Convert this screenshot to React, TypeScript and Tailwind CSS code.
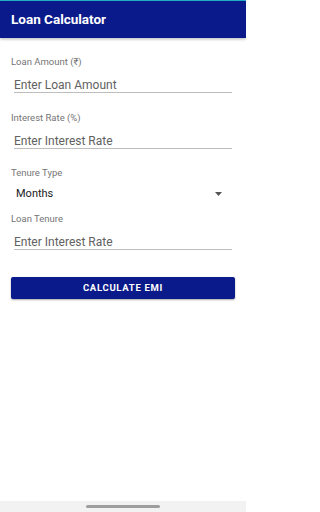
import React from "react";

function Field({ label, placeholder }: { label: string; placeholder: string }) {
  return (
    <div className="flex flex-col">
      <div className="h-[12px] text-[9.5px] leading-[12px] text-[#757575]">{label}</div>
      <div className="mt-[8px] mx-[3px] h-[17px] pt-px border-b border-[#bdbdbd] text-[12px] leading-[16px] text-[#616161]">
        {placeholder}
      </div>
    </div>
  );
}

export default function App() {
  return (
    <div
      className="w-[246px] h-[512px] bg-white flex flex-col overflow-hidden"
      style={{ fontFamily: "Roboto, 'Noto Sans', sans-serif" }}
    >
      <div className="h-px bg-[#22b8cf]" />
      <div className="h-[37px] bg-[#0a1a8a] flex items-center px-[11px] shadow-[0_1px_3px_rgba(0,0,0,0.3)]">
        <span className="text-white text-[13.5px] font-bold">Loan Calculator</span>
      </div>
      <div className="flex flex-col px-[11px] pt-[18px]">
        <Field label="Loan Amount (₹)" placeholder="Enter Loan Amount" />
        <div className="h-[19px]" />
        <Field label="Interest Rate (%)" placeholder="Enter Interest Rate" />
        <div className="h-[18px]" />
        <div className="flex flex-col">
          <div className="h-[12px] text-[9.5px] leading-[12px] text-[#757575]">Tenure Type</div>
          <div className="mt-[7px] ml-[5px] mr-[13px] h-[16px] flex items-center justify-between">
            <span className="text-[11px] leading-[16px] text-[#212121]">Months</span>
            <svg width="7" height="4" viewBox="0 0 7 4">
              <path d="M0 0 L7 0 L3.5 4 Z" fill="#555" />
            </svg>
          </div>
        </div>
        <div className="h-[11px]" />
        <Field label="Loan Tenure" placeholder="Enter Interest Rate" />
        <button className="mt-[27px] h-[22px] w-full rounded-[2px] bg-[#0a1a8a] text-white text-[9.5px] font-bold tracking-[0.7px] shadow-[0_1px_2px_rgba(0,0,0,0.35)]">
          CALCULATE EMI
        </button>
      </div>
      <div className="flex-1" />
      <div className="h-[11px] bg-[#f2f2f2] flex items-center justify-center">
        <div className="w-[74px] h-[3px] rounded-full bg-[#9e9e9e]" />
      </div>
    </div>
  );
}
